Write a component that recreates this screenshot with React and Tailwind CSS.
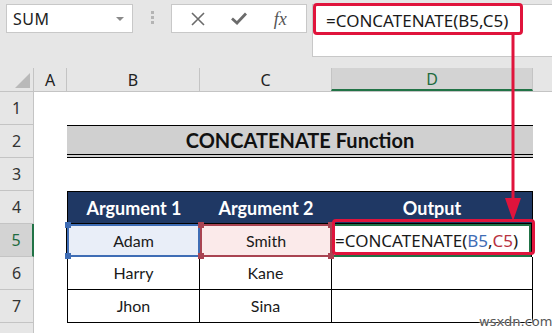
import React from "react";

const ui = { fontFamily: '"Noto Sans", "Open Sans", sans-serif' };
const cell = { fontFamily: 'Lato, "Open Sans", sans-serif' };

function RowHead({ n, active }) {
  return (
    <div
      className={`w-[34px] shrink-0 flex items-center justify-center border-r border-b border-[#c4c4c4] text-[16px] ${
        active ? "bg-[#d3d3d3] text-[#1e6b40] border-r-2 border-r-[#217346]" : "bg-[#e6e6e6] text-[#333]"
      }`}
      style={ui}
    >
      {n}
    </div>
  );
}

function Handle({ pos, color }) {
  return <div className={`absolute w-[6px] h-[6px] ${pos} ${color}`} />;
}

export default function App() {
  return (
    <div className="relative w-[552px] h-[333px] overflow-hidden bg-white">
      {/* formula bar area */}
      <div className="h-[68px] bg-[#e6e6e6] flex items-start">
        <div
          className="ml-[6px] mt-[4px] w-[127px] h-[29px] bg-white border border-[#c8c8c8] flex items-center justify-between pl-[6px] pr-[8px]"
          style={ui}
        >
          <span className="text-[16px] text-[#222] tracking-[0.5px]">SUM</span>
          <span className="w-0 h-0 border-l-[4px] border-r-[4px] border-t-[4px] border-l-transparent border-r-transparent border-t-[#8a8a8a]" />
        </div>
        <div className="ml-[18px] mt-[11px] flex flex-col gap-[2px]">
          <div className="w-[3px] h-[3px] bg-[#b4b4b4]" />
          <div className="w-[3px] h-[3px] bg-[#b4b4b4]" />
          <div className="w-[3px] h-[3px] bg-[#b4b4b4]" />
        </div>
        <div className="ml-[17px] mt-[4px] w-[136px] h-[29px] bg-white border border-[#c8c8c8] flex items-center justify-around px-[6px]">
          <svg width="14" height="14" viewBox="0 0 14 14">
            <path d="M1 1 L13 13 M13 1 L1 13" stroke="#6b6b6b" strokeWidth="1.6" fill="none" />
          </svg>
          <svg width="16" height="13" viewBox="0 0 16 13">
            <path d="M1 6.5 L6 11 L15 1.5" stroke="#6b6b6b" strokeWidth="2.8" fill="none" />
          </svg>
          <span className="text-[18px] italic text-[#555] leading-none" style={{ fontFamily: '"Liberation Serif", serif' }}>
            fx
          </span>
        </div>
        <div className="ml-[5px] mt-[4px] flex-1 h-[53px] bg-white border border-[#c8c8c8] border-r-0 pl-[13px] pt-[3px]">
          <span className="text-[17px] text-[#1a1a1a]" style={ui}>
            =CONCATENATE(B5,C5)
          </span>
        </div>
      </div>

      {/* column headers */}
      <div className="flex h-[24px] bg-[#e6e6e6] border-b border-[#c4c4c4]" style={ui}>
        <div className="w-[34px] shrink-0 border-r border-[#c4c4c4] flex items-end justify-end pr-[3px] pb-[3px]">
          <div style={{ width: 0, height: 0, borderStyle: "solid", borderTopWidth: 0, borderRightWidth: 0, borderBottomWidth: 15, borderLeftWidth: 15, borderBottomColor: "#b9b9b9", borderLeftColor: "transparent" }} />
        </div>
        <div className="w-[33px] shrink-0 border-r border-[#c4c4c4] flex items-center justify-center text-[16px] text-[#222]">A</div>
        <div className="w-[133px] shrink-0 border-r border-[#c4c4c4] flex items-center justify-center text-[16px] text-[#222]">B</div>
        <div className="w-[131px] shrink-0 flex items-center justify-center text-[16px] text-[#222]">C</div>
        <div className="w-[202px] shrink-0 bg-[#d3d3d3] border-b-2 border-[#217346] border-x border-x-[#c4c4c4] flex items-center justify-center text-[16px] text-[#1e6b40]">D</div>
        <div className="flex-1" />
      </div>

      {/* row 1 */}
      <div className="flex h-[33px]">
        <RowHead n="1" />
      </div>
      {/* row 2 title */}
      <div className="flex h-[33px]">
        <RowHead n="2" />
        <div className="w-[33px] shrink-0" />
        <div
          className="w-[466px] shrink-0 bg-[#d0d0d0] border-t border-black border-b-[4px] border-double flex items-center justify-center text-[20px] font-bold text-[#111]"
          style={cell}
        >
          CONCATENATE Function
        </div>
      </div>
      {/* row 3 */}
      <div className="flex h-[33px]">
        <RowHead n="3" />
      </div>
      {/* row 4 header */}
      <div className="flex h-[33px]">
        <RowHead n="4" />
        <div className="w-[33px] shrink-0" />
        <div className="w-[466px] shrink-0 flex bg-[#1f3864] border border-black text-white font-bold text-[18px]" style={cell}>
          <div className="w-[132px] flex items-center justify-center pt-[2px]">Argument 1</div>
          <div className="w-[132px] flex items-center justify-center pt-[2px]">Argument 2</div>
          <div className="flex-1 flex items-center justify-center pt-[2px]">Output</div>
        </div>
      </div>
      {/* row 5 */}
      <div className="flex h-[33px]">
        <RowHead n="5" active />
        <div className="w-[32px] shrink-0" />
        <div className="w-[466px] shrink-0 flex text-[16px] text-[#1a1a1a] border-x border-black" style={cell}>
          <div className="relative w-[133px] bg-[#e9eef8] border-2 border-[#3f6db5] flex items-center justify-center">
            Adam
            <Handle pos="-left-[4px] -top-[4px]" color="bg-[#3f6db5]" />
            <Handle pos="-left-[4px] -bottom-[4px]" color="bg-[#3f6db5]" />
          </div>
          <div className="relative w-[132px] bg-[#fbeaea] border-2 border-[#a94452] flex items-center justify-center">
            Smith
            <Handle pos="-left-[4px] -top-[4px]" color="bg-[#a94452]" />
            <Handle pos="-right-[4px] -top-[4px]" color="bg-[#a94452]" />
            <Handle pos="-left-[4px] -bottom-[4px]" color="bg-[#a94452]" />
            <Handle pos="-right-[4px] -bottom-[4px]" color="bg-[#a94452]" />
          </div>
          <div className="flex-1 border-2 border-[#217346] flex items-center pl-[1px] whitespace-nowrap text-[17px]" style={ui}>
            =CONCATENATE(<span className="text-[#3f6db5]">B5</span>,<span className="text-[#b8323f]">C5</span>)
          </div>
        </div>
      </div>
      {/* row 6 */}
      <div className="flex h-[33px]">
        <RowHead n="6" />
        <div className="w-[33px] shrink-0" />
        <div className="w-[466px] shrink-0 flex text-[16px] text-[#1a1a1a] border-x border-b border-black" style={cell}>
          <div className="w-[132px] border-r border-black flex items-center justify-center">Harry</div>
          <div className="w-[132px] border-r border-black flex items-center justify-center">Kane</div>
          <div className="flex-1" />
        </div>
      </div>
      {/* row 7 */}
      <div className="flex h-[33px]">
        <RowHead n="7" />
        <div className="w-[33px] shrink-0" />
        <div className="w-[466px] shrink-0 flex text-[16px] text-[#1a1a1a] border-x border-b border-black" style={cell}>
          <div className="w-[132px] border-r border-black flex items-center justify-center">Jhon</div>
          <div className="w-[132px] border-r border-black flex items-center justify-center">Sina</div>
          <div className="flex-1" />
        </div>
      </div>
      <div className="flex h-[33px]">
        <RowHead n="" />
      </div>

      {/* annotations */}
      <div className="absolute left-[313px] top-[3px] w-[210px] h-[32px] border-[3px] border-[#e0143c] rounded-[4px]" />
      <div className="absolute left-[332px] top-[219px] w-[203px] h-[36px] border-[3px] border-[#e0143c] rounded-[4px]" />
      <svg className="absolute left-0 top-0" width="552" height="333" viewBox="0 0 552 333">
        <line x1="513" y1="35" x2="513" y2="205" stroke="#e0143c" strokeWidth="3" />
        <path d="M505 198 L521 198 L513 221 Z" fill="#e0143c" />
      </svg>
      <div
        className="absolute left-[479px] top-[315px] text-[13px] text-[#555] leading-none"
        style={{ fontFamily: '"DejaVu Sans", sans-serif', textShadow: "0 0 2px #fff, 0 0 2px #fff" }}
      >
        wsxdn.com
      </div>
    </div>
  );
}
